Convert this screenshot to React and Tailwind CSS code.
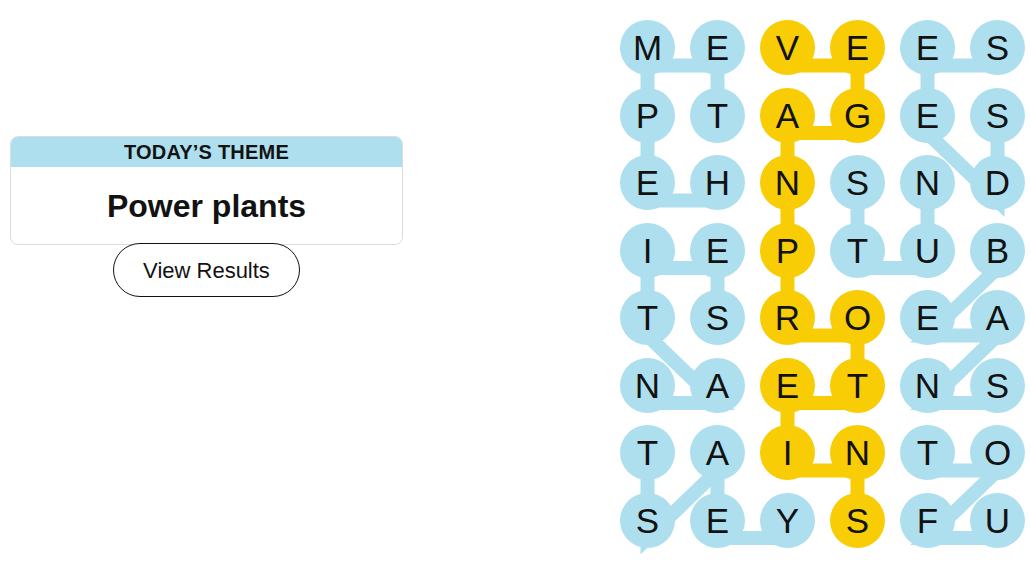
import React from "react";

const GRID = [
  "MEVEES",
  "PTAGES",
  "EHNSND",
  "IEPTUB",
  "TSROEA",
  "NAETNS",
  "TAINTO",
  "SEYSFU",
];

const SPANGRAM = [
  [2, 0], [3, 0], [3, 1], [2, 1], [2, 2], [2, 3], [2, 4], [3, 4], [3, 5], [2, 5], [2, 6], [3, 6], [3, 7],
];

const WORDS = [
  [[1, 1], [1, 0], [0, 0], [0, 1], [0, 2], [1, 2]],
  [[5, 0], [4, 0], [4, 1], [5, 2], [5, 1]],
  [[4, 2], [4, 3], [3, 3], [3, 2]],
  [[5, 3], [4, 4], [5, 4], [4, 5], [5, 5]],
  [[1, 4], [1, 3], [0, 3], [0, 4], [1, 5], [0, 5]],
  [[2, 7], [1, 7], [1, 6], [0, 7], [0, 6]],
  [[4, 6], [5, 6], [4, 7], [5, 7]],
];

const isYellow = (c, r) => SPANGRAM.some(([x, y]) => x === c && y === r);

const pts = (path) =>
  path.map(([c, r]) => `${27.5 + 70 * c},${27.5 + 67.5 * r + 18}`).join(" ");

function Board() {
  return (
    <div className="relative mt-[20px]">
      <svg
        className="absolute left-0 top-0"
        width="405"
        height="560"
        viewBox="0 0 405 560"
      >
        {WORDS.map((w, i) => (
          <polyline
            key={i}
            points={pts(w)}
            fill="none"
            stroke="#aedfee"
            strokeWidth="14"
            strokeLinejoin="miter"
            strokeLinecap="butt"
          />
        ))}
        <polyline
          points={pts(SPANGRAM)}
          fill="none"
          stroke="#f8cd05"
          strokeWidth="14"
          strokeLinejoin="miter"
          strokeLinecap="butt"
        />
      </svg>
      <div className="relative grid grid-cols-[repeat(6,55px)] gap-x-[15px] gap-y-[12.5px]">
        {GRID.map((row, r) =>
          row.split("").map((ch, c) => (
            <div
              key={`${r}-${c}`}
              className={`w-[55px] h-[55px] rounded-full flex items-center justify-center text-[35px] leading-none text-[#121212] ${
                isYellow(c, r) ? "bg-[#f8cd05]" : "bg-[#aedfee]"
              }`}
            >
              {ch}
            </div>
          ))
        )}
      </div>
    </div>
  );
}

export default function App() {
  return (
    <div
      className="flex w-[1031px] h-[580px] bg-white overflow-hidden"
      style={{ fontFamily: '"Liberation Sans", Arial, sans-serif' }}
    >
      <div className="w-[620px] pl-[10px] pt-[136px] shrink-0">
        <div className="w-[393px] flex flex-col items-center">
          <div className="w-full rounded-lg border border-[#dcdcdc] overflow-hidden">
            <div className="h-[30px] bg-[#aedfee] flex items-center justify-center text-[20px] font-bold tracking-[0.2px] text-[#121212]">
              TODAY’S THEME
            </div>
            <div className="h-[77px] flex items-center justify-center text-[32px] font-bold text-[#121212]">
              Power plants
            </div>
          </div>
          <button className="-mt-[2px] w-[187px] h-[54px] rounded-full border border-[#121212] bg-white text-[22px] text-[#121212] flex items-center justify-center">
            View Results
          </button>
        </div>
      </div>
      <Board />
    </div>
  );
}
